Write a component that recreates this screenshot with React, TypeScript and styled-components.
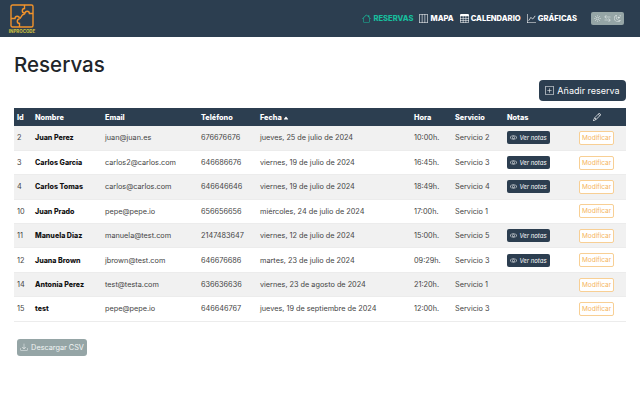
import React from 'react';
import styled, { createGlobalStyle } from 'styled-components';
import {
  BsHouse,
  BsLayoutThreeColumns,
  BsTable,
  BsGraphUp,
  BsSun,
  BsArrowLeftRight,
  BsMoonStars,
  BsPlusSquare,
  BsEye,
  BsPencil,
  BsDownload,
  BsCaretUpFill,
} from 'react-icons/bs';

const GlobalStyle = createGlobalStyle`
  html, body {
    margin: 0;
    background: #fff;
    font-family: 'Inter', 'Liberation Sans', sans-serif;
    color: #333;
  }
`;

const TopBar = styled.header`
  display: flex;
  align-items: center;
  justify-content: space-between;
  height: 37px;
  padding: 0 16px 0 10px;
  background: #2c3e50;
`;

const Logo = styled.div`
  display: flex;
  flex-direction: column;
  align-items: center;
  width: 24px;
  gap: 1px;
`;

const LogoText = styled.span`
  font-size: 4.4px;
  line-height: 5px;
  font-weight: 800;
  color: #c4bb3f;
  white-space: nowrap;
`;

const Nav = styled.nav`
  display: flex;
  align-items: center;
  gap: 6px;
`;

const NavLink = styled.a<{ $active?: boolean }>`
  display: flex;
  align-items: center;
  gap: 2px;
  font-size: 7.6px;
  font-weight: 800;
  color: ${(p) => (p.$active ? '#18bc9c' : '#fff')};
  svg {
    width: 9px;
    height: 9px;
  }
`;

const ThemeToggle = styled.div`
  display: flex;
  align-items: center;
  justify-content: center;
  gap: 3px;
  width: 33px;
  height: 13px;
  margin-left: 8px;
  border-radius: 2px;
  background: #95a5a6;
  color: #e8eeee;
  svg {
    width: 7px;
    height: 7px;
  }
`;

const Main = styled.main`
  padding: 0 14px;
`;

const Title = styled.h1`
  margin: 0;
  padding-top: 14px;
  height: 29px;
  font-size: 20.5px;
  line-height: 28px;
  font-weight: 500;
  color: #212529;
`;

const Actions = styled.div`
  display: flex;
  justify-content: flex-end;
  height: 28px;
`;

const AddButton = styled.button`
  display: flex;
  align-items: center;
  justify-content: center;
  gap: 3px;
  width: 87px;
  height: 21px;
  padding: 0;
  border: 0;
  border-radius: 4px;
  background: #2c3e50;
  color: #fff;
  font-family: inherit;
  font-size: 9px;
  svg {
    width: 9px;
    height: 9px;
  }
`;

const Table = styled.table`
  width: 612px;
  table-layout: fixed;
  border-collapse: collapse;
  font-size: 7.3px;
`;

const HeadRow = styled.tr`
  height: 18px;
  background: #2c3e50;
  color: #fff;
`;

const HeadCell = styled.th<{ $center?: boolean }>`
  padding: 0 0 0 3px;
  font-weight: 800;
  text-align: ${(p) => (p.$center ? 'center' : 'left')};
  svg {
    vertical-align: -1px;
  }
`;

const Row = styled.tr<{ $striped: boolean }>`
  height: 24.4px;
  background: ${(p) => (p.$striped ? '#f1f1f1' : '#fff')};
  border-bottom: 1px solid #ececec;
`;

const Cell = styled.td<{ $center?: boolean }>`
  padding: 0 0 0 3px;
  color: #444;
  white-space: nowrap;
  text-align: ${(p) => (p.$center ? 'center' : 'left')};
`;

const NameCell = styled(Cell)`
  font-size: 7.1px;
  font-weight: 800;
  color: #111;
`;

const NotesButton = styled.button`
  display: inline-flex;
  align-items: center;
  justify-content: center;
  gap: 2px;
  width: 43px;
  height: 13px;
  padding: 0;
  border: 0;
  border-radius: 2px;
  background: #2c3e50;
  color: #fff;
  font-family: inherit;
  font-size: 6px;
  font-style: italic;
  vertical-align: middle;
`;

const EditButton = styled.button`
  width: 35px;
  height: 14px;
  padding: 0;
  border: 1px solid #f8cf94;
  border-radius: 2px;
  background: #fff;
  color: #f5b560;
  font-family: inherit;
  font-size: 6.5px;
  vertical-align: middle;
`;

const CsvButton = styled.button`
  display: flex;
  align-items: center;
  justify-content: center;
  gap: 3px;
  width: 70px;
  height: 17px;
  margin: 17px 0 0 3px;
  padding: 0;
  border: 0;
  border-radius: 3px;
  background: #95a5a6;
  color: #f2f5f5;
  font-family: inherit;
  font-size: 7.3px;
  svg {
    width: 8px;
    height: 8px;
  }
`;

const reservas = [
  { id: 2, name: 'Juan Perez', email: 'juan@juan.es', phone: '676676676', date: 'jueves, 25 de julio de 2024', time: '10:00h.', service: 'Servicio 2', notes: true },
  { id: 3, name: 'Carlos Garcia', email: 'carlos2@carlos.com', phone: '646686676', date: 'viernes, 19 de julio de 2024', time: '16:45h.', service: 'Servicio 3', notes: true },
  { id: 4, name: 'Carlos Tomas', email: 'carlos@carlos.com', phone: '646646646', date: 'viernes, 19 de julio de 2024', time: '18:49h.', service: 'Servicio 4', notes: true },
  { id: 10, name: 'Juan Prado', email: 'pepe@pepe.io', phone: '656656656', date: 'miércoles, 24 de julio de 2024', time: '17:00h.', service: 'Servicio 1', notes: false },
  { id: 11, name: 'Manuela Diaz', email: 'manuela@test.com', phone: '2147483647', date: 'viernes, 12 de julio de 2024', time: '15:00h.', service: 'Servicio 5', notes: true },
  { id: 12, name: 'Juana Brown', email: 'jbrown@test.com', phone: '646676686', date: 'martes, 23 de julio de 2024', time: '09:29h.', service: 'Servicio 3', notes: true },
  { id: 14, name: 'Antonia Perez', email: 'test@testa.com', phone: '636636636', date: 'viernes, 23 de agosto de 2024', time: '21:20h.', service: 'Servicio 1', notes: false },
  { id: 15, name: 'test', email: 'pepe@pepe.io', phone: '646646767', date: 'jueves, 19 de septiembre de 2024', time: '12:00h.', service: 'Servicio 3', notes: false },
];

const columns = [18, 70, 96, 59, 154, 41, 52, 60, 62];

function LogoMark() {
  return (
    <svg width="24" height="24" viewBox="0 0 24 24" fill="none" stroke="#f0922b" strokeWidth="1.4">
      <rect x="1" y="1" width="22" height="22" rx="1.5" />
      <path d="M1 14.5h4a2.2 2.2 0 0 1 4.4 0" />
      <path d="M14.5 1v3.5a2.2 2.2 0 0 0 0 4.4v1.5" />
      <path d="M23 9.5h-3.6a2.2 2.2 0 0 0-4.4 0" />
      <path d="M9.5 23v-3.6a2.2 2.2 0 0 1 0-4.4" />
      <path d="M9.5 14.5c2 0 1-4 5-4.5" />
    </svg>
  );
}

export default function App() {
  return (
    <>
      <GlobalStyle />
      <TopBar>
        <Logo>
          <LogoMark />
          <LogoText>INPROCODE</LogoText>
        </Logo>
        <Nav>
          <NavLink $active><BsHouse />RESERVAS</NavLink>
          <NavLink><BsLayoutThreeColumns />MAPA</NavLink>
          <NavLink><BsTable />CALENDARIO</NavLink>
          <NavLink><BsGraphUp />GRÁFICAS</NavLink>
          <ThemeToggle><BsSun /><BsArrowLeftRight /><BsMoonStars /></ThemeToggle>
        </Nav>
      </TopBar>
      <Main>
        <Title>Reservas</Title>
        <Actions>
          <AddButton><BsPlusSquare />Añadir reserva</AddButton>
        </Actions>
        <Table>
          <colgroup>
            {columns.map((w, i) => <col key={i} style={{ width: w }} />)}
          </colgroup>
          <thead>
            <HeadRow>
              <HeadCell>Id</HeadCell>
              <HeadCell>Nombre</HeadCell>
              <HeadCell>Email</HeadCell>
              <HeadCell>Teléfono</HeadCell>
              <HeadCell>Fecha <BsCaretUpFill size={6} /></HeadCell>
              <HeadCell>Hora</HeadCell>
              <HeadCell>Servicio</HeadCell>
              <HeadCell>Notas</HeadCell>
              <HeadCell $center><BsPencil size={8} /></HeadCell>
            </HeadRow>
          </thead>
          <tbody>
            {reservas.map((r, i) => (
              <Row key={r.id} $striped={i % 2 === 0}>
                <Cell>{r.id}</Cell>
                <NameCell>{r.name}</NameCell>
                <Cell>{r.email}</Cell>
                <Cell>{r.phone}</Cell>
                <Cell>{r.date}</Cell>
                <Cell>{r.time}</Cell>
                <Cell>{r.service}</Cell>
                <Cell>
                  {r.notes && <NotesButton><BsEye size={7} />Ver notas</NotesButton>}
                </Cell>
                <Cell $center><EditButton>Modificar</EditButton></Cell>
              </Row>
            ))}
          </tbody>
        </Table>
        <CsvButton><BsDownload />Descargar CSV</CsvButton>
      </Main>
    </>
  );
}
